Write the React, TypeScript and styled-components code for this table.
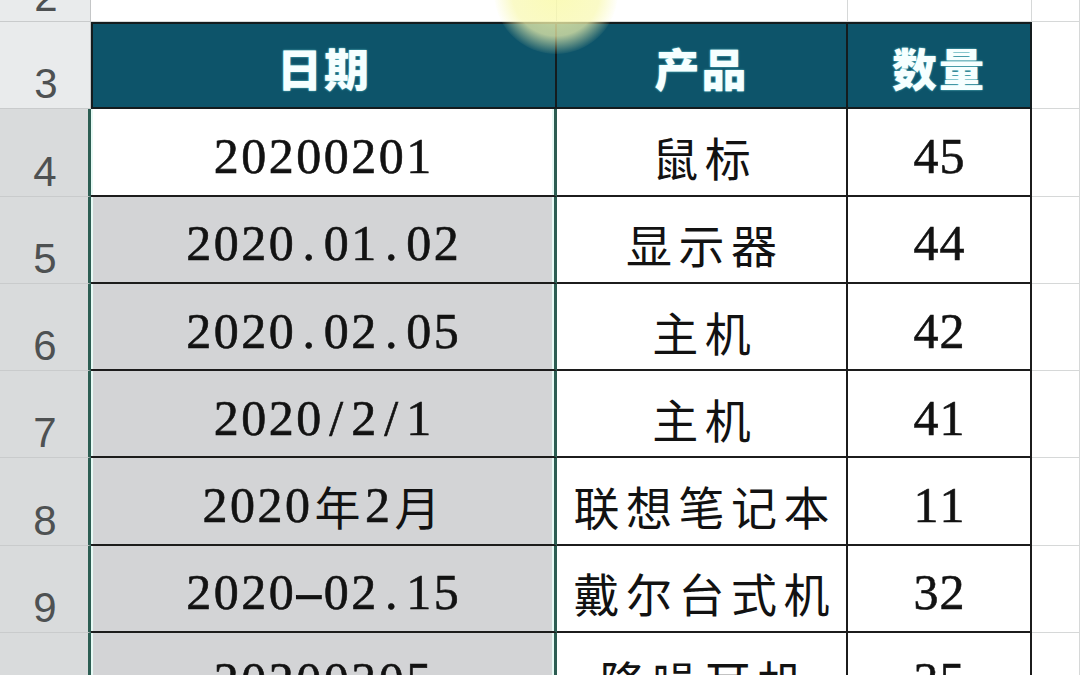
import React from "react";
import styled, { createGlobalStyle, css } from "styled-components";

const Global = createGlobalStyle`
  html, body { margin: 0; padding: 0; background: #ffffff; }
  body { width: 1080px; height: 675px; overflow: hidden; }
`;

const Viewport = styled.div`
  position: relative;
  width: 1080px;
  height: 675px;
  overflow: hidden;
  background: #ffffff;
`;

const Sheet = styled.div`
  display: grid;
  grid-template-columns: 91px 466px 291px 184px 48px;
  grid-template-rows: 22px repeat(8, 87.3px);
`;

const RowHead = styled.div<{ $sel?: boolean }>`
  box-sizing: border-box;
  display: flex;
  align-items: flex-end;
  justify-content: center;
  padding: 0 0 3px 2px;
  overflow: hidden;
  font-family: "Liberation Sans", Arial, sans-serif;
  font-size: 42px;
  line-height: 1;
  color: #4e5152;
  background: ${(p) => (p.$sel ? "#d9dbdc" : "#e9ebec")};
  border-bottom: 1px solid #c9cbcc;
  border-right: ${(p) => (p.$sel ? "3px solid #2c5d52" : "1px solid #c4c6c7")};
`;

const Blank = styled.div<{ $edge?: boolean }>`
  box-sizing: border-box;
  background: #ffffff;
  border-right: 1px solid #d6d8d8;
  border-bottom: ${(p) => (p.$edge ? "none" : "1px solid #d6d8d8")};
`;

const Head = styled.div<{ $first?: boolean }>`
  box-sizing: border-box;
  display: flex;
  align-items: center;
  justify-content: center;
  padding-top: 4px;
  background: #0d546a;
  border-top: 2px solid #141c1e;
  border-right: 2px solid #141c1e;
  border-bottom: 2px solid #141c1e;
  ${(p) => p.$first && css`border-left: 2px solid #141c1e;`}
  font-family: "Noto Sans CJK SC", "Noto Sans", sans-serif;
  font-weight: 900;
  font-size: 45px;
  letter-spacing: 2px;
  color: #f6ffff;
  text-shadow: 0 0 2px rgba(150, 255, 255, 0.8);
`;

const Cell = styled.div<{ $shade?: boolean; $sel?: boolean }>`
  box-sizing: border-box;
  display: flex;
  align-items: center;
  justify-content: center;
  padding-top: 8px;
  background: ${(p) => (p.$shade ? "#d3d4d6" : "#ffffff")};
  border-bottom: 2px solid #1c1c1c;
  border-right: ${(p) => (p.$sel ? "3px solid #2c5d52" : "2px solid #1c1c1c")};
  ${(p) =>
    p.$sel &&
    css`
      box-shadow: inset 2px 0 0 #e6faf5, inset -2px 0 0 #e6faf5;
    `}
  color: #121212;
  white-space: nowrap;
`;

const Glyph = styled.span<{ $wide?: boolean; $narrow?: boolean; $dash?: boolean }>`
  display: inline-block;
  text-align: center;
  width: ${(p) => (p.$wide ? "52.5px" : p.$narrow ? "26px" : "27.5px")};
  font-family: ${(p) =>
    p.$wide
      ? `"Noto Sans CJK SC", sans-serif`
      : `"Liberation Serif", "Times New Roman", serif`};
  font-size: ${(p) => (p.$wide ? "46px" : "50px")};
  line-height: 1;
  -webkit-text-stroke: ${(p) => (p.$wide ? "0" : "0.6px #121212")};
  ${(p) => p.$dash && css`transform: scaleX(1.9);`}
`;

const Glow = styled.div`
  position: absolute;
  left: 494px;
  top: -70px;
  width: 124px;
  height: 124px;
  border-radius: 50%;
  pointer-events: none;
  background: radial-gradient(
    circle,
    rgba(250, 250, 170, 0.85) 0%,
    rgba(248, 248, 175, 0.7) 50%,
    rgba(245, 245, 180, 0) 72%
  );
`;

const Mono: React.FC<{ text: string; narrow?: boolean }> = ({ text, narrow }) => (
  <>
    {Array.from(text).map((ch, i) => {
      const wide = ch.charCodeAt(0) > 0x2e80;
      return (
        <Glyph key={i} $wide={wide} $narrow={narrow && !wide} $dash={ch === "-"}>
          {ch}
        </Glyph>
      );
    })}
  </>
);

const rows = [
  { n: 4, date: "20200201", prod: "鼠标", qty: "45", active: true },
  { n: 5, date: "2020.01.02", prod: "显示器", qty: "44" },
  { n: 6, date: "2020.02.05", prod: "主机", qty: "42" },
  { n: 7, date: "2020/2/1", prod: "主机", qty: "41" },
  { n: 8, date: "2020年2月", prod: "联想笔记本", qty: "11" },
  { n: 9, date: "2020-02.15", prod: "戴尔台式机", qty: "32" },
  { n: 10, date: "20200305", prod: "降噪耳机", qty: "35" },
];

export default function App() {
  return (
    <>
      <Global />
      <Viewport>
        <Sheet>
          <RowHead>2</RowHead>
          <Blank />
          <Blank />
          <Blank />
          <Blank />

          <RowHead>3</RowHead>
          <Head $first>日期</Head>
          <Head>产品</Head>
          <Head>数量</Head>
          <Blank />

          {rows.map((r) => (
            <React.Fragment key={r.n}>
              <RowHead $sel>{r.n}</RowHead>
              <Cell $sel $shade={!r.active}>
                <Mono text={r.date} />
              </Cell>
              <Cell>
                <Mono text={r.prod} />
              </Cell>
              <Cell>
                <Mono text={r.qty} narrow />
              </Cell>
              <Blank />
            </React.Fragment>
          ))}
        </Sheet>
        <Glow />
      </Viewport>
    </>
  );
}
